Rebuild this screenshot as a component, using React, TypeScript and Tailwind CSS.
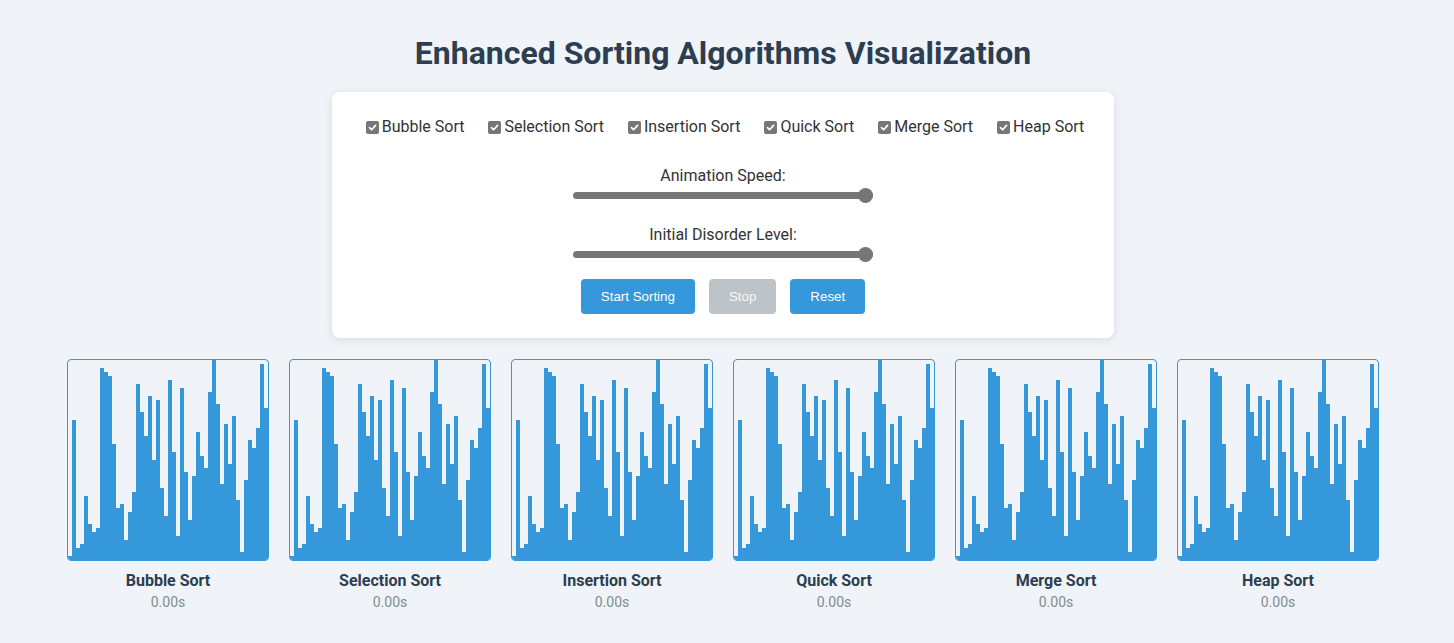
import React from "react";

const VALUES = [
  1, 35, 3, 4, 16, 9, 7, 8, 48, 47, 46, 29, 13, 14, 5, 12, 17, 44, 37, 31, 41,
  25, 40, 18, 11, 45, 27, 6, 43, 22, 10, 21, 32, 26, 23, 42, 50, 39, 19, 34,
  24, 36, 15, 2, 20, 30, 28, 33, 49, 38,
];

const ALGOS = [
  "Bubble Sort",
  "Selection Sort",
  "Insertion Sort",
  "Quick Sort",
  "Merge Sort",
  "Heap Sort",
];

function CheckBox() {
  return (
    <span className="flex h-[13px] w-[13px] items-center justify-center rounded-[2px] bg-[#767676]">
      <svg width="9" height="9" viewBox="0 0 10 10" fill="none">
        <path
          d="M1.6 5.2 L4 7.5 L8.4 2.6"
          stroke="#ffffff"
          strokeWidth="1.9"
          strokeLinecap="round"
          strokeLinejoin="round"
        />
      </svg>
    </span>
  );
}

function Slider() {
  return (
    <div className="relative mx-auto flex h-[16px] w-[300px] items-center">
      <div className="h-[7px] w-full rounded-full bg-[#767676]" />
      <div className="absolute right-0 top-[0.5px] h-[15px] w-[15px] rounded-full bg-[#767676]" />
    </div>
  );
}

function Chart({ name }: { name: string }) {
  return (
    <div className="flex flex-col items-center">
      <div className="flex h-[202px] w-[202px] items-end overflow-hidden rounded-[4px] border border-[#3498db]">
        {VALUES.map((v, i) => (
          <div
            key={i}
            className="w-[4px] shrink-0 bg-[#3498db]"
            style={{ height: `${v * 4}px` }}
          />
        ))}
      </div>
      <div className="mt-[10px] text-[16px] font-bold leading-[19px] text-[#2c3e50]">
        {name}
      </div>
      <div className="mt-[4px] text-[14px] leading-[17px] text-[#7f8c8d]">
        0.00s
      </div>
    </div>
  );
}

export default function App() {
  return (
    <div
      className="min-h-[643px] w-full bg-[#f0f4f8] pb-[30px]"
      style={{ fontFamily: "Roboto, 'Noto Sans', sans-serif" }}
    >
      <div className="w-[1446px]">
        <h1 className="pt-[34px] text-center text-[32px] font-bold leading-[38px] text-[#2c3e50]">
          Enhanced Sorting Algorithms Visualization
        </h1>

        <div className="mx-auto mt-[20px] w-[782px] rounded-[8px] bg-white px-[20px] pb-[24px] pt-[25px] shadow-[0_2px_10px_rgba(0,0,0,0.1)]">
          <div className="flex justify-center gap-[24px] pl-[4px] text-[16px] leading-[20px] text-[#333]">
            {ALGOS.map((a) => (
              <label key={a} className="flex items-center gap-[3px]">
                <CheckBox />
                <span>{a}</span>
              </label>
            ))}
          </div>

          <div className="mt-[29px] text-center text-[16px] leading-[19px] text-[#333]">
            Animation Speed:
          </div>
          <div className="mt-[2px]">
            <Slider />
          </div>

          <div className="mt-[22px] text-center text-[16px] leading-[19px] text-[#333]">
            Initial Disorder Level:
          </div>
          <div className="mt-[2px]">
            <Slider />
          </div>

          <div
            className="mt-[17px] flex justify-center gap-[14px] text-[13.33px] leading-[15px] text-white"
            style={{ fontFamily: "'Liberation Sans', Arial, sans-serif" }}
          >
            <button className="rounded-[4px] bg-[#3498db] px-[20px] py-[10px]">
              Start Sorting
            </button>
            <button className="rounded-[4px] bg-[#bdc3c7] px-[20px] py-[10px] text-[#f5f6f7]">
              Stop
            </button>
            <button className="rounded-[4px] bg-[#3498db] px-[20px] py-[10px]">
              Reset
            </button>
          </div>
        </div>

        <div className="mt-[21px] flex justify-center gap-[20px]">
          {ALGOS.map((a) => (
            <Chart key={a} name={a} />
          ))}
        </div>
      </div>
    </div>
  );
}
